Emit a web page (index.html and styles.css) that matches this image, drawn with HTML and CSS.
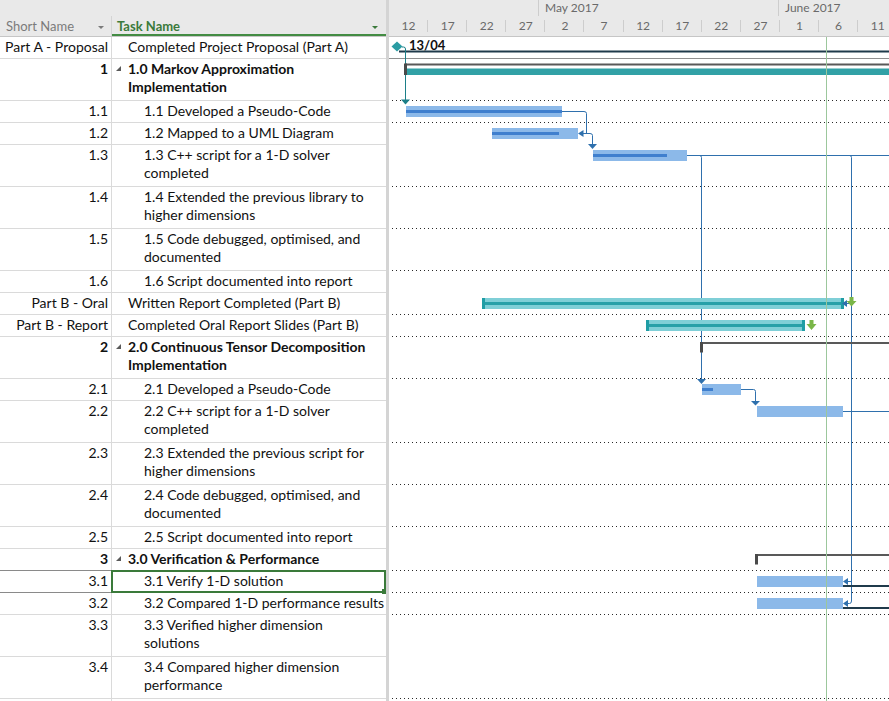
FILE: index.html
```html
<!DOCTYPE html>
<html>
<head>
<meta charset="utf-8">
<link rel="stylesheet" href="styles.css">
</head>
<body>
<div class="app">
  <div class="grid">
    <div class="grid-head">
      <div class="gh-top"></div>
      <div class="gh-row">
        <div class="hd hd-short">Short Name<span class="dd"></span></div>
        <div class="hd hd-task">Task Name<span class="dd green"></span></div>
      </div>
    </div>
    <div class="rows">
      <div class="row"><div class="c-short">Part A - Proposal</div><div class="c-task l0"><span class="txt">Completed Project Proposal (Part A)</span></div></div>
      <div class="row h2 bold"><div class="c-short">1</div><div class="c-task"><span class="tog"></span><span class="txt">1.0 Markov Approximation<br>Implementation</span></div></div>
      <div class="row"><div class="c-short">1.1</div><div class="c-task l1"><span class="txt">1.1 Developed a Pseudo-Code</span></div></div>
      <div class="row"><div class="c-short">1.2</div><div class="c-task l1"><span class="txt">1.2 Mapped to a UML Diagram</span></div></div>
      <div class="row h2"><div class="c-short">1.3</div><div class="c-task l1"><span class="txt">1.3 C++ script for a 1-D solver<br>completed</span></div></div>
      <div class="row h2"><div class="c-short">1.4</div><div class="c-task l1"><span class="txt">1.4 Extended the previous library to<br>higher dimensions</span></div></div>
      <div class="row h2"><div class="c-short">1.5</div><div class="c-task l1"><span class="txt">1.5 Code debugged, optimised, and<br>documented</span></div></div>
      <div class="row"><div class="c-short">1.6</div><div class="c-task l1"><span class="txt">1.6 Script documented into report</span></div></div>
      <div class="row"><div class="c-short">Part B - Oral</div><div class="c-task l0"><span class="txt">Written Report Completed (Part B)</span></div></div>
      <div class="row"><div class="c-short">Part B - Report</div><div class="c-task l0"><span class="txt">Completed Oral Report Slides (Part B)</span></div></div>
      <div class="row h2 bold"><div class="c-short">2</div><div class="c-task"><span class="tog"></span><span class="txt">2.0 Continuous Tensor Decomposition<br>Implementation</span></div></div>
      <div class="row"><div class="c-short">2.1</div><div class="c-task l1"><span class="txt">2.1 Developed a Pseudo-Code</span></div></div>
      <div class="row h2"><div class="c-short">2.2</div><div class="c-task l1"><span class="txt">2.2 C++ script for a 1-D solver<br>completed</span></div></div>
      <div class="row h2"><div class="c-short">2.3</div><div class="c-task l1"><span class="txt">2.3 Extended the previous script for<br>higher dimensions</span></div></div>
      <div class="row h2"><div class="c-short">2.4</div><div class="c-task l1"><span class="txt">2.4 Code debugged, optimised, and<br>documented</span></div></div>
      <div class="row"><div class="c-short">2.5</div><div class="c-task l1"><span class="txt">2.5 Script documented into report</span></div></div>
      <div class="row bold"><div class="c-short">3</div><div class="c-task"><span class="tog"></span><span class="txt">3.0 Verification &amp; Performance</span></div></div>
      <div class="row sel"><div class="c-short">3.1</div><div class="c-task l1"><span class="txt">3.1 Verify 1-D solution</span></div></div>
      <div class="row"><div class="c-short">3.2</div><div class="c-task l1"><span class="txt">3.2 Compared 1-D performance results</span></div></div>
      <div class="row h2"><div class="c-short">3.3</div><div class="c-task l1"><span class="txt">3.3 Verified higher dimension<br>solutions</span></div></div>
      <div class="row h2"><div class="c-short">3.4</div><div class="c-task l1"><span class="txt">3.4 Compared higher dimension<br>performance</span></div></div>
      <div class="row"><div class="c-short"></div><div class="c-task"></div></div>
    </div>
  </div>
  <div class="split"></div>
  <div class="chart">
    <div class="ts">
      <div class="tier1">
        <div class="t1 t1a"></div>
        <div class="t1 t1b">May 2017</div>
        <div class="t1 t1c">June 2017</div>
      </div>
      <div class="tier2">
        <div class="t2">12</div><div class="t2">17</div><div class="t2">22</div><div class="t2">27</div>
        <div class="t2">2</div><div class="t2">7</div><div class="t2">12</div><div class="t2">17</div>
        <div class="t2">22</div><div class="t2">27</div><div class="t2">1</div><div class="t2">6</div><div class="t2">11</div>
      </div>
    </div>
    <div class="cbody">
      <div class="crow solid"></div>
      <div class="crow h2 dot"></div>
      <div class="crow dot"></div>
      <div class="crow"></div>
      <div class="crow h2 dot"></div>
      <div class="crow h2 dot"></div>
      <div class="crow h2 dot"></div>
      <div class="crow"></div>
      <div class="crow dot"></div>
      <div class="crow dot"></div>
      <div class="crow h2 dot"></div>
      <div class="crow"></div>
      <div class="crow h2 dot"></div>
      <div class="crow h2 dot"></div>
      <div class="crow h2 dot"></div>
      <div class="crow"></div>
      <div class="crow dot"></div>
      <div class="crow dot"></div>
      <div class="crow dot"></div>
      <div class="crow h2"></div>
      <div class="crow h2 dot"></div>
      <div class="crow"></div>
      <svg class="gantt" width="500" height="664" viewBox="0 0 500 664">
        <g transform="translate(-389 -37)">
          <!-- milestone Part A -->
          <rect x="399" y="50.5" width="490" height="2" fill="#1f3a4b"/>
          <path d="M402 47 H403.5 Q405.5 47 405.5 49 V100" fill="none" stroke="#1c7f88" stroke-width="1"/>
          <polygon points="401,99.5 410,99.5 405.5,104.5" fill="#1c7f88"/>
          <polygon points="397,41.5 402.5,46.5 397,51.5 391.5,46.5" fill="#2a9ca3"/>
          <text x="409" y="49.5" class="ms-label">13/04</text>

          <!-- summary 1 -->
          <rect x="405" y="63.5" width="484" height="2" fill="#595959"/>
          <rect x="404" y="63.5" width="3" height="11.5" fill="#4a4a4a"/>
          <rect x="407" y="68.5" width="482" height="6.5" fill="#31a1a6"/>

          <!-- 1.1 -->
          <rect x="406" y="106" width="156" height="11" fill="#8cb9e9"/>
          <rect x="406" y="110" width="156" height="3" fill="#3f7fce"/>
          <path d="M562 111.5 H584 Q586.5 111.5 586.5 113.5 V133.5 H583" fill="none" stroke="#2f70ad" stroke-width="1"/>
          <polygon points="578,133.5 583.5,130 583.5,137" fill="#2f70ad"/>

          <!-- 1.2 -->
          <rect x="492" y="128" width="86" height="11" fill="#8cb9e9"/>
          <rect x="492" y="132" width="67" height="3" fill="#3f7fce"/>
          <path d="M583 133.5 H590 Q592.5 133.5 592.5 135.5 V144.5" fill="none" stroke="#2f70ad" stroke-width="1"/>
          <polygon points="588,144 597,144 592.5,149" fill="#2f70ad"/>

          <!-- 1.3 -->
          <rect x="593" y="150" width="94" height="11" fill="#8cb9e9"/>
          <rect x="593" y="154" width="74" height="3" fill="#3f7fce"/>
          <path d="M687 155.5 H889" fill="none" stroke="#2f70ad" stroke-width="1"/>
          <path d="M699.5 155.5 Q701.5 155.5 701.5 157.5 V379.5" fill="none" stroke="#2f70ad" stroke-width="1"/>
          <polygon points="697,379 706,379 701.5,384" fill="#2f70ad"/>
          <path d="M849.5 155.5 Q851.5 155.5 851.5 157.5 V601 Q851.5 603.5 849.5 603.5 H847" fill="none" stroke="#2f70ad" stroke-width="1"/>
          <path d="M851 303.5 H846 M851 581.5 H847" fill="none" stroke="#2f70ad" stroke-width="1"/>

          <!-- Part B Oral -->
          <rect x="482" y="298" width="362" height="11" fill="#7fcfd7"/>
          <rect x="482" y="302" width="362" height="3" fill="#27a0a8"/>
          <rect x="482" y="298" width="3" height="11" fill="#1f9da5"/>
          <rect x="841" y="298" width="3" height="11" fill="#1f9da5"/>
          <polygon points="842,303.5 847,300 847,307" fill="#2f70ad"/>
          <polygon points="849.5,297 853.5,297 853.5,301 856.5,301 851.5,306.5 846.5,301 849.5,301" fill="#7ab648"/>

          <!-- Part B Report -->
          <rect x="646" y="320" width="159" height="11" fill="#7fcfd7"/>
          <rect x="646" y="324" width="159" height="3" fill="#27a0a8"/>
          <rect x="646" y="320" width="3" height="11" fill="#1f9da5"/>
          <rect x="802" y="320" width="3" height="11" fill="#1f9da5"/>
          <polygon points="809.5,320 813.5,320 813.5,324 816.5,324 811.5,330 806.5,324 809.5,324" fill="#7ab648"/>

          <!-- summary 2 -->
          <rect x="700" y="342" width="189" height="2" fill="#595959"/>
          <rect x="700" y="342" width="3" height="10.5" fill="#4a4a4a"/>

          <!-- 2.1 -->
          <rect x="702" y="384" width="39" height="11" fill="#8cb9e9"/>
          <rect x="702" y="388" width="11" height="3" fill="#3f7fce"/>
          <path d="M741 389.5 H753.5 Q755.5 389.5 755.5 391.5 V401" fill="none" stroke="#2f70ad" stroke-width="1"/>
          <polygon points="751,401 760,401 755.5,405.5" fill="#2f70ad"/>

          <!-- 2.2 -->
          <rect x="757" y="406" width="86" height="11" fill="#8cb9e9"/>
          <path d="M843 411.5 H889" fill="none" stroke="#2f70ad" stroke-width="1"/>

          <!-- summary 3 -->
          <rect x="755" y="554" width="134" height="2" fill="#595959"/>
          <rect x="755" y="554" width="3" height="10.5" fill="#4a4a4a"/>

          <!-- 3.1 / 3.2 -->
          <rect x="757" y="576" width="86" height="11" fill="#8cb9e9"/>
          <rect x="843" y="585" width="46" height="2" fill="#1f3a4b"/>
          <polygon points="843,581.5 848,578 848,585" fill="#2f70ad"/>
          <rect x="757" y="598" width="86" height="11" fill="#8cb9e9"/>
          <rect x="843" y="607" width="46" height="2" fill="#1f3a4b"/>
          <polygon points="843,603.5 848,600 848,607" fill="#2f70ad"/>

          <!-- status line -->
          <rect x="826" y="37" width="1" height="664" fill="#9cc79c"/>
        </g>
      </svg>
    </div>
  </div>
</div>
</body>
</html>
```
FILE: styles.css
```css
* { box-sizing: border-box; }
html, body { margin: 0; padding: 0; }
body {
  width: 889px;
  height: 701px;
  overflow: hidden;
  background: #ffffff;
  font-family: Lato, "Liberation Sans", sans-serif;
  font-size: 14px;
  color: #111111;
}
.app { display: flex; height: 701px; }

/* ---------- grid ---------- */
.grid { width: 386px; flex: none; overflow: hidden; }
.grid-head {
  height: 37px;
  background: #e9e9e9;
  border-bottom: 1px solid #c6c6c6;
  display: flex;
  flex-direction: column;
}
.gh-top { height: 16px; }
.gh-row { display: flex; height: 20px; }
.hd {
  display: flex;
  align-items: center;
  line-height: 18px;
  font-size: 13px;
}
.hd-short {
  width: 112px;
  padding-left: 6px;
  color: #7b7b7b;
  border-right: 1px solid #d4d4d4;
}
.hd-task {
  flex: 1;
  padding-left: 5px;
  color: #3b7a3b;
  font-weight: bold;
  box-shadow: inset 0 -2px 0 #438c43;
}
.dd {
  width: 0; height: 0;
  border-left: 3px solid transparent;
  border-right: 3px solid transparent;
  border-top: 3px solid #7b7b7b;
  margin-left: auto;
  margin-right: 7px;
  margin-top: 2px;
}
.dd.green { border-top-color: #3b7a3b; margin-right: 8px; }

.rows { display: flex; flex-direction: column; }
.row { display: flex; height: 22px; flex: none; }
.row.h2 { height: 42px; }
.row.bold { font-weight: bold; }
.c-short {
  width: 112px;
  flex: none;
  text-align: right;
  padding: 1px 3px 0 0;
  line-height: 18px;
  white-space: nowrap;
  border-right: 1px solid #dadada;
  border-bottom: 1px solid #dadada;
}
.c-task {
  flex: 1;
  display: flex;
  padding-top: 1px;
  line-height: 18px;
  white-space: nowrap;
  border-bottom: 1px solid #dadada;
  position: relative;
}
.c-task.l0 { padding-left: 16px; }
.c-task.l1 { padding-left: 32px; }
.tog { width: 16px; flex: none; }
.tog::before {
  content: "";
  display: block;
  margin: 6px 0 0 4px;
  width: 0; height: 0;
  border-left: 5px solid transparent;
  border-bottom: 5px solid #5a5a5a;
}
.row.sel .c-short {
  border-bottom-color: #8a8a8a;
  box-shadow: 0 -1px 0 #8a8a8a;
}
.row.sel .c-task::after {
  content: "";
  position: absolute;
  left: -1px; right: 0; top: -1px; bottom: -1px;
  border: 2px solid #3a7a3a;
}
.row.sel .c-task::before {
  content: "";
  position: absolute;
  right: -1px; bottom: -2px;
  width: 5px; height: 5px;
  background: #3a7a3a;
  z-index: 1;
}

.split { width: 3px; flex: none; background: #d4d4d4; }

/* ---------- chart ---------- */
.chart { flex: 1; overflow: hidden; position: relative; }
.ts {
  height: 37px;
  background: #e9e9e9;
  border-bottom: 1px solid #c6c6c6;
  color: #6a6a6a;
  font-size: 12px;
}
.tier1 { display: flex; height: 16px; line-height: 16px; }
.t1 { flex: none; white-space: nowrap; }
.t1a { width: 150px; border-right: 1px solid #cdcdcd; }
.t1b { width: 240px; padding-left: 6px; border-right: 1px solid #cdcdcd; }
.t1c { width: 120px; padding-left: 6px; }
.tier2 { display: flex; height: 20px; }
.t2 {
  flex: none;
  width: 39.1px;
  text-align: center;
  line-height: 18px;
  padding-top: 1px;
  background: linear-gradient(#cdcdcd, #cdcdcd) right 4px / 1px 12px no-repeat;
}

.cbody { position: relative; display: flex; flex-direction: column; }
.crow { height: 22px; flex: none; }
.crow.h2 { height: 42px; }
.crow.solid { border-bottom: 1px solid #8f8f8f; }
.crow.dot {
  background-image: linear-gradient(to right, #2a2a2a 1px, transparent 1px);
  background-size: 4px 1px;
  background-repeat: repeat-x;
  background-position: 3px bottom;
}
.gantt { position: absolute; left: 0; top: 0; }
.ms-label { font-family: Lato, "Liberation Sans", sans-serif; font-weight: bold; font-size: 13px; fill: #111; }
```
